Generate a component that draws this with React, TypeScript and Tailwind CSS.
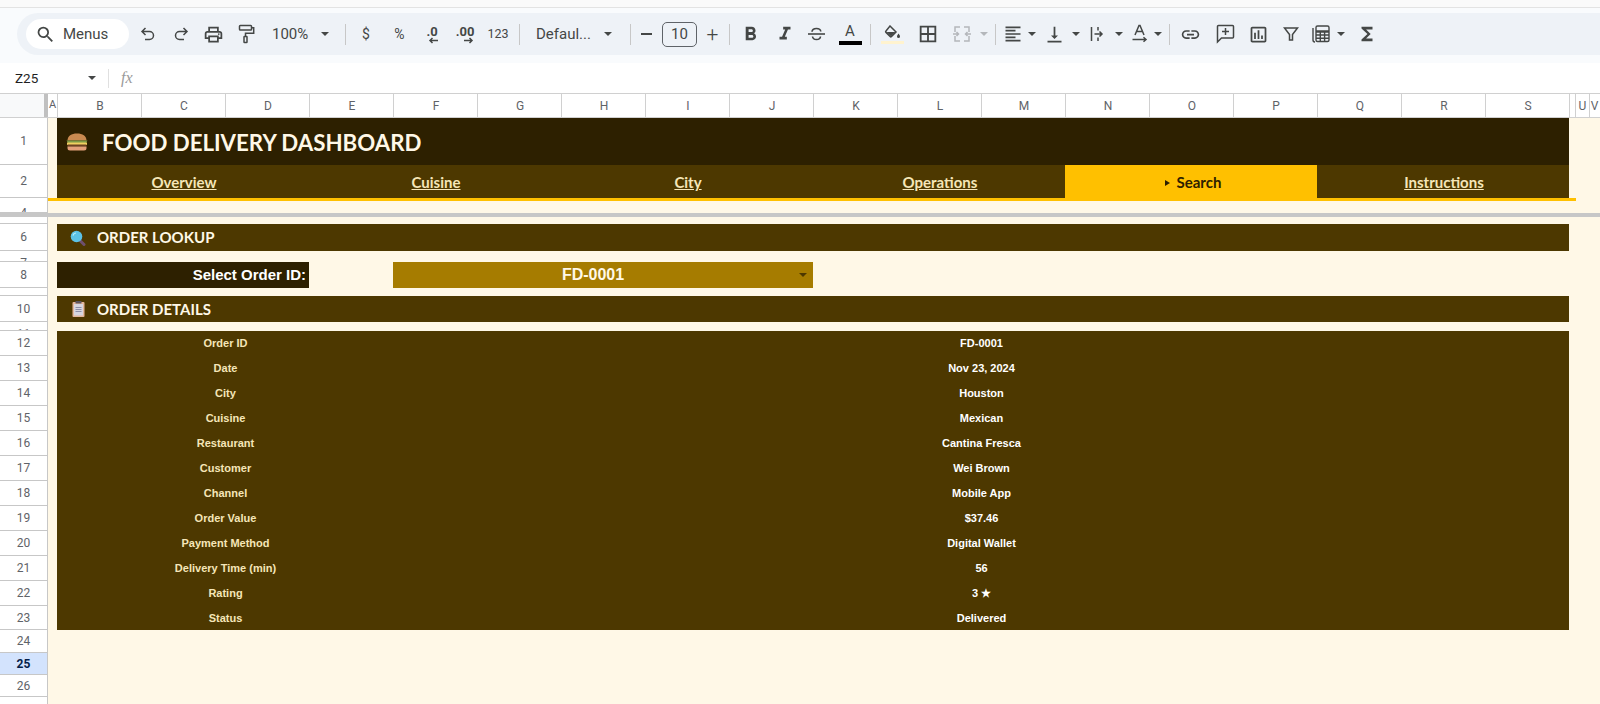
import type { ReactNode } from 'react'
import {
  MdFormatAlignLeft,
  MdFormatBold,
  MdFormatItalic,
  MdFunctions,
  MdLink,
  MdOutlineBorderAll,
  MdOutlineInsertChart,
  MdOutlinePrint,
  MdSearch,
  MdVerticalAlignBottom,
} from 'react-icons/md'

const COLUMNS = ['B', 'C', 'D', 'E', 'F', 'G', 'H', 'I', 'J', 'K', 'L', 'M', 'N', 'O', 'P', 'Q', 'R', 'S']

const NAV_TABS = ['Overview', 'Cuisine', 'City', 'Operations', 'Search', 'Instructions']

const ORDER_ROWS: [string, string][] = [
  ['Order ID', 'FD-0001'],
  ['Date', 'Nov 23, 2024'],
  ['City', 'Houston'],
  ['Cuisine', 'Mexican'],
  ['Restaurant', 'Cantina Fresca'],
  ['Customer', 'Wei Brown'],
  ['Channel', 'Mobile App'],
  ['Order Value', '$37.46'],
  ['Payment Method', 'Digital Wallet'],
  ['Delivery Time (min)', '56'],
  ['Rating', '3 ★'],
  ['Status', 'Delivered'],
]

function Caret({ className = 'border-t-[#444746]' }: { className?: string }) {
  return <span className={`inline-block h-0 w-0 border-x-[4.5px] border-t-[4.5px] border-x-transparent ${className}`} />
}

function Divider({ className = '' }: { className?: string }) {
  return <div className={`h-[21px] w-px shrink-0 bg-[#c7c7c7] ${className}`} />
}

function Btn({ w = 'w-[33px]', children }: { w?: string; children: ReactNode }) {
  return <div className={`flex h-full shrink-0 items-center justify-center text-[#444746] ${w}`}>{children}</div>
}

function UndoIcon({ flip }: { flip?: boolean }) {
  return (
    <svg width="16" height="16" viewBox="0 0 16 16" fill="none" stroke="#444746" strokeWidth="1.500" className={flip ? '-scale-x-100' : ''}>
      <path d="M5.500 2 2 5.500 5.500 9M2 5.500h7.500a4 4 0 0 1 0 8H5" />
    </svg>
  )
}

function RollerIcon() {
  return (
    <svg width="17" height="20" viewBox="0 0 17 20" fill="none" stroke="#444746" strokeWidth="1.500">
      <rect x="1.500" y="1.500" width="12" height="4.500" rx="0.800" />
      <path d="M13.500 3.700h2.200v5.500H7.500v3" />
      <rect x="6" y="12.500" width="3" height="6" rx="0.500" />
    </svg>
  )
}

function StrikeIcon() {
  return (
    <svg width="19" height="18" viewBox="0 0 19 18" fill="none" stroke="#444746" strokeWidth="1.600">
      <path d="M1 9h17" />
      <path d="M5 6.800C5.200 4.300 7.300 3.500 9.500 3.500s4 1 4.300 3" />
      <path d="M5.500 11.500c.3 2.300 2 3 4 3s3.800-.9 4-3" />
    </svg>
  )
}

function FillIcon() {
  return (
    <svg width="17" height="14" viewBox="0 0 17 14">
      <path d="M6 1 12 7l-4.500 4.500a1 1 0 0 1-1.400 0L2 7.400a1 1 0 0 1 0-1.400z" fill="none" stroke="#444746" strokeWidth="1.500" />
      <path d="M2.500 7h9l-4.500 4.500z" fill="#444746" />
      <path d="M14.500 8.500c1 1.400 1.500 2.100 1.500 2.900a1.500 1.500 0 0 1-3 0c0-.8.500-1.500 1.500-2.900z" fill="#444746" />
    </svg>
  )
}

function WrapIcon() {
  return (
    <svg width="18" height="18" viewBox="0 0 18 18" fill="none" stroke="#444746" strokeWidth="1.500">
      <path d="M2.500 2v14M9 2v3.500M9 12.500v3.500" />
      <path d="M5.500 9h7M10.500 6.500 13 9l-2.500 2.500" />
    </svg>
  )
}

function RotateIcon() {
  return (
    <svg width="18" height="20" viewBox="0 0 18 20" fill="none" stroke="#444746" strokeWidth="1.500">
      <path d="M4 11 8 1.500h1L13 11M5.500 7.500h6" />
      <path d="M1.500 15.500h13M12.500 13.300l2.500 2.200-2.500 2.200" />
    </svg>
  )
}

function MergeIcon() {
  return (
    <svg width="20" height="20" viewBox="0 0 20 20" fill="none" stroke="#b4b7bb" strokeWidth="1.500">
      <path d="M8 3H3v5M3 12v5h5M12 3h5v5M17 12v5h-5" />
      <path d="M1 10h5M4.500 8l2 2-2 2M19 10h-5M15.500 8l-2 2 2 2" />
    </svg>
  )
}

function CommentIcon() {
  return (
    <svg width="19" height="20" viewBox="0 0 19 20" fill="none" stroke="#444746" strokeWidth="1.500">
      <path d="M1.500 18V2.500a1 1 0 0 1 1-1h14a1 1 0 0 1 1 1V13a1 1 0 0 1-1 1H5.500z" />
      <path d="M9.500 4v7M6 7.500h7" />
    </svg>
  )
}

function FilterIcon() {
  return (
    <svg width="16" height="16" viewBox="0 0 16 16" fill="none" stroke="#444746" strokeWidth="1.500">
      <path d="M1.500 2h13L9.500 8.500V14h-3V8.500z" />
    </svg>
  )
}

function CalcIcon() {
  return (
    <svg width="20" height="20" viewBox="0 0 20 20" fill="none" stroke="#444746" strokeWidth="1.400">
      <path d="M2 4v12a2 2 0 0 0 2 2" />
      <path d="M5 3.500a1.500 1.500 0 0 1 1.500-1.500h10A1.500 1.500 0 0 1 18 3.500V16a1.500 1.500 0 0 1-1.500 1.500h-10A1.500 1.500 0 0 1 5 16z" />
      <path d="M5 7.500h13" strokeWidth="2.500" />
      <path d="M5 11h13M5 14.300h13M9.300 7.500v10M13.600 7.500v10" />
    </svg>
  )
}

function DecimalIcon({ label, dir }: { label: string; dir: 'left' | 'right' }) {
  return (
    <div className="flex flex-col items-end">
      <span className="text-[13px] leading-[13px] font-bold">{label}</span>
      <svg width="10" height="7" viewBox="0 0 10 7" fill="none" stroke="#444746" strokeWidth="1.500" className="mt-[-1px]">
        {dir === 'left' ? <path d="M10 3.500H2M4.500 1 2 3.500 4.500 6" /> : <path d="M0 3.500h8M5.500 1 8 3.500 5.500 6" />}
      </svg>
    </div>
  )
}

function Toolbar() {
  return (
    <div className="h-[56px] border-t border-[#e3e3e3] bg-[#f9fbfd] pt-[5px] pl-[17px]">
      <div className="flex h-[42px] items-center rounded-l-[21px] bg-[#eef2f7] pl-[9px]">
        <div className="mr-[2px] flex h-[30px] w-[103px] shrink-0 items-center rounded-full bg-white pl-[9px] text-[#444746]">
          <MdSearch size={21} />
          <span className="ml-[7px] text-[15px]">Menus</span>
        </div>
        <Btn><UndoIcon /></Btn>
        <Btn><UndoIcon flip /></Btn>
        <Btn><MdOutlinePrint size={21} /></Btn>
        <Btn><RollerIcon /></Btn>
        <div className="flex h-full w-[82px] shrink-0 items-center pl-[9px] text-[#444746]">
          <span className="text-[15px]">100%</span>
          <Caret className="ml-[13px] border-t-[#444746]" />
        </div>
        <Divider />
        <div className="ml-[3px] flex h-full w-[34px] shrink-0 items-center justify-center text-[14px] text-[#444746]">$</div>
        <Btn><span className="text-[14px]">%</span></Btn>
        <Btn w="w-[32px]"><DecimalIcon label=".0" dir="left" /></Btn>
        <Btn w="w-[34px]"><DecimalIcon label=".00" dir="right" /></Btn>
        <Btn w="w-[32px]"><span className="text-[12.500px]">123</span></Btn>
        <Divider className="ml-[5px]" />
        <div className="flex h-full w-[110px] shrink-0 items-center pl-[16px] text-[#444746]">
          <span className="w-[68px] text-[15px]">Defaul...</span>
          <Caret />
        </div>
        <Divider />
        <Btn w="w-[31px]"><span className="h-[2px] w-[11px] bg-[#444746]" /></Btn>
        <div className="flex h-[25px] w-[35px] shrink-0 items-center justify-center rounded-[5px] border border-[#5f6368] text-[15px] text-[#444746]">10</div>
        <Btn w="w-[31px]"><span className="text-[21px] leading-none font-light">+</span></Btn>
        <Divider className="ml-[1px]" />
        <Btn w="w-[40px]"><MdFormatBold size={23} /></Btn>
        <Btn w="w-[30px]"><MdFormatItalic size={22} /></Btn>
        <Btn><StrikeIcon /></Btn>
        <Btn w="w-[34px]">
          <div className="flex flex-col items-center">
            <span className="text-[15px] leading-[15px]">A</span>
            <span className="mt-[2px] h-[4px] w-[23px] bg-black" />
          </div>
        </Btn>
        <Divider className="ml-[3px]" />
        <div className="ml-[4px] flex h-full w-[35px] shrink-0 items-center justify-center text-[#444746]">
          <div className="flex flex-col items-center gap-[2px]">
            <FillIcon />
            <span className="h-[3px] w-[23px] bg-[#fff3cf]" />
          </div>
        </div>
        <Btn w="w-[35px]"><MdOutlineBorderAll size={22} /></Btn>
        <Btn w="w-[34px]"><MergeIcon /></Btn>
        <Btn w="w-[10px]"><Caret className="border-t-[#b4b7bb]" /></Btn>
        <Divider className="mr-[5px] ml-[6px]" />
        <Btn w="w-[24px]"><MdFormatAlignLeft size={20} /></Btn>
        <Btn w="w-[14px]"><Caret /></Btn>
        <Btn w="w-[30px]"><MdVerticalAlignBottom size={21} /></Btn>
        <Btn w="w-[14px]"><Caret /></Btn>
        <Btn w="w-[29px]"><WrapIcon /></Btn>
        <Btn w="w-[13px]"><Caret /></Btn>
        <Btn w="w-[29px]"><RotateIcon /></Btn>
        <Btn w="w-[7px]"><Caret /></Btn>
        <Divider className="ml-[8px]" />
        <Btn w="w-[41px]"><MdLink size={21} /></Btn>
        <Btn w="w-[28px]"><CommentIcon /></Btn>
        <Btn w="w-[38px]"><MdOutlineInsertChart size={21} /></Btn>
        <Btn w="w-[28px]"><FilterIcon /></Btn>
        <Btn w="w-[32px]"><CalcIcon /></Btn>
        <Btn w="w-[8px]"><Caret /></Btn>
        <Btn w="w-[44px]"><MdFunctions size={22} /></Btn>
      </div>
    </div>
  )
}

function FormulaBar() {
  return (
    <div className="flex h-[30px] items-center bg-white pl-[15px]">
      <span className="w-[73px] text-[13.500px] text-[#1f1f1f]">Z25</span>
      <Caret />
      <div className="ml-[12px] h-[19px] w-px bg-[#e0e0e0]" />
      <span className="ml-[12px] font-['Liberation_Serif',serif] text-[16px] text-[#9a9a9a] italic">fx</span>
    </div>
  )
}

function ColumnHeader() {
  return (
    <div className="flex h-[25px] border-y border-[#d0d0d0] bg-white text-[12px] text-[#5f6368]">
      <div className="flex w-[48px] shrink-0 bg-[#f8f9fa]">
        <div className="w-[44px]" />
        <div className="w-[4px] bg-[#c0c0c0]" />
      </div>
      <div className="flex w-[10px] shrink-0 items-center justify-center border-r border-[#d0d0d0] text-[11px]">A</div>
      {COLUMNS.map((c) => (
        <div key={c} className="flex w-[84px] shrink-0 items-center justify-center border-r border-[#d0d0d0] pl-[1px]">
          {c}
        </div>
      ))}
      <div className="w-[6px] shrink-0 border-r border-[#d0d0d0]" />
      <div className="flex w-[14px] shrink-0 items-center justify-center border-r border-[#d0d0d0]">U</div>
      <div className="flex w-[9px] shrink-0 items-center justify-center">V</div>
    </div>
  )
}

// Row header + cell area. Short rows clip their number like the real sheet does.
function Row({
  h,
  num,
  clipped,
  active,
  children,
}: {
  h: string
  num?: number
  clipped?: string
  active?: boolean
  children?: ReactNode
}) {
  return (
    <div className={`flex shrink-0 overflow-hidden ${h}`}>
      <div
        className={`flex w-[48px] shrink-0 justify-center overflow-hidden border-r border-b border-[#c7c7c7] text-[12px] ${
          active ? 'bg-[#d3e3fd] font-bold text-[#041e49]' : 'bg-white text-[#5f6368]'
        } ${clipped ?? 'items-center'}`}
      >
        {num}
      </div>
      <div className="min-w-0 flex-1 bg-[#fff8e7] pl-[9px]">{children}</div>
    </div>
  )
}

function BurgerIcon() {
  return (
    <svg width="24" height="18" viewBox="0 0 23 18">
      <path d="M2 7.500C2 3 6 .5 11.500.5S21 3 21 7.500z" fill="#c98a50" />
      <path d="M1 7.500h21l-1.500 2.500h-18z" fill="#7d9a45" />
      <rect x="1.500" y="9.500" width="20" height="2.500" fill="#f0d060" />
      <rect x="2" y="11.500" width="19" height="2" fill="#6e4322" />
      <path d="M2 13.500h19V15a2.500 2.500 0 0 1-2.500 2.500h-14A2.500 2.500 0 0 1 2 15z" fill="#e39f78" />
    </svg>
  )
}

function LensIcon() {
  return (
    <svg width="16" height="16" viewBox="0 0 16 16">
      <path d="M9.500 10l4.500 4.500" stroke="#6e4f6e" strokeWidth="3" strokeLinecap="round" />
      <circle cx="6.500" cy="6.500" r="5.800" fill="#5cc2e6" />
      <path d="M3 5.500A3.500 3.500 0 0 1 6 3" stroke="#b6ecfa" strokeWidth="1.200" fill="none" />
    </svg>
  )
}

function ClipboardIcon() {
  return (
    <svg width="13" height="16" viewBox="0 0 13 16">
      <rect x="0.500" y="1" width="12" height="15" rx="1" fill="#e3b79c" />
      <rect x="2" y="3" width="9" height="11.500" fill="#d6d6e0" />
      <rect x="3.500" y="0" width="6" height="2.500" rx="0.500" fill="#5b5560" />
      <path d="M3.500 6.500h6M3.500 8.500h6M3.500 10.500h6" stroke="#8d8fa8" strokeWidth="1" />
    </svg>
  )
}

const headingFont = "font-['Lato',sans-serif]"

function SectionBar({ icon, title }: { icon: ReactNode; title: string }) {
  return (
    <div className="flex h-full w-[1512px] items-center bg-[#4d3800]">
      <div className="flex w-[40px] shrink-0 justify-center pl-[2px]">{icon}</div>
      <span className={`${headingFont} text-[15px] font-bold text-[#fff8e7]`}>{title}</span>
    </div>
  )
}

export default function App() {
  return (
    <div className="h-[704px] w-[1600px] overflow-hidden bg-white font-['Roboto',sans-serif]">
      <div className="h-[7px] bg-[#fafafa]" />
      <Toolbar />
      <FormulaBar />
      <ColumnHeader />

      <Row h="h-[47px]" num={1}>
        <div className="flex h-full w-[1512px] items-center bg-[#2d2000] pl-[8px]">
          <BurgerIcon />
          <span className={`${headingFont} ml-[13px] pt-[2px] text-[22.250px] font-bold text-[#fff8e7]`}>FOOD DELIVERY DASHBOARD</span>
        </div>
      </Row>
      <Row h="h-[33px]" num={2}>
        <div className="grid h-full w-[1512px] grid-cols-6 bg-[#4d3800]">
          {NAV_TABS.map((tab) =>
            tab === 'Search' ? (
              <div key={tab} className={`${headingFont} flex items-center justify-center gap-[7px] bg-[#ffc000] pt-[2px] pl-[4px] text-[15px] font-bold text-[#2d2000]`}>
                <span className="h-0 w-0 border-y-[3px] border-l-[5px] border-y-transparent border-l-[#2d2000]" />
                {tab}
              </div>
            ) : (
              <div key={tab} className={`${headingFont} flex items-center justify-center pt-[2px] pl-[2px] text-[15px] font-bold text-[#f5e6b8] underline`}>
                {tab}
              </div>
            ),
          )}
        </div>
      </Row>
      <div className="flex h-[3px] shrink-0">
        <div className="w-[48px] shrink-0 border-r border-[#c7c7c7] bg-white" />
        <div className="h-full w-[1528px] bg-[#ffc000]" />
        <div className="flex-1 bg-[#fff8e7]" />
      </div>
      <Row h="h-[12px]" num={4} clipped="items-start pt-[5px] leading-[14px]" />
      <div className="h-[4px] bg-[#c7c7c7]" />
      <Row h="h-[7px]" num={5} clipped="items-start pt-[5px] leading-[14px]" />
      <Row h="h-[27px]" num={6}>
        <SectionBar icon={<LensIcon />} title="ORDER LOOKUP" />
      </Row>
      <Row h="h-[11px]" num={7} clipped="items-start pt-[5px] leading-[14px]" />
      <Row h="h-[26px]" num={8}>
        <div className="flex h-full font-['Liberation_Sans',sans-serif] font-bold">
          <div className="flex w-[252px] items-center justify-end bg-[#2d2000] pr-[3px] text-[15px] text-white">Select Order ID:</div>
          <div className="ml-[84px] flex w-[420px] items-center bg-[#a67c00] text-[16px] text-[#fff8e7]">
            <span className="flex-1 pr-[6px] text-center">FD-0001</span>
            <Caret className="mr-[6px] border-t-[#4d3800]" />
          </div>
        </div>
      </Row>
      <Row h="h-[8px]" num={9} clipped="items-start pt-[5px] leading-[14px]" />
      <Row h="h-[26px]" num={10}>
        <SectionBar icon={<ClipboardIcon />} title="ORDER DETAILS" />
      </Row>
      <Row h="h-[9px]" num={11} clipped="items-start pt-[5px] leading-[14px]" />

      {ORDER_ROWS.map(([label, value], i) => (
        <Row key={label} h={i === 11 ? 'h-[24px]' : 'h-[25px]'} num={12 + i}>
          <div className="flex h-full w-[1512px] items-center bg-[#4d3800] font-['Liberation_Sans',sans-serif] text-[11px] font-bold">
            <span className="w-[336px] pl-[1px] text-center text-[#f5e6b8]">{label}</span>
            <span className="w-[1176px] pl-[1px] text-center text-white">{value}</span>
          </div>
        </Row>
      ))}

      <Row h="h-[23px]" num={24} />
      <Row h="h-[22px]" num={25} active />
      <Row h="h-[22px]" num={26} />
      <Row h="h-[20px]" />
    </div>
  )
}
